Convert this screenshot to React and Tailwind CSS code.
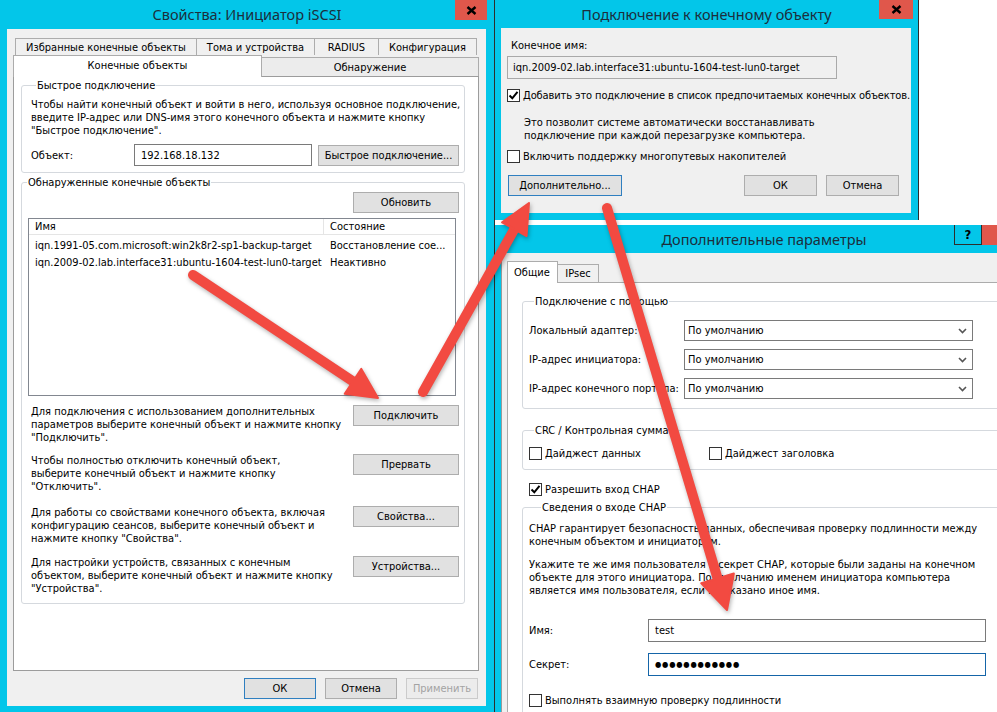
import clsx from "clsx";

const BODY = "font-['DejaVu_Sans_Condensed','DejaVu_Sans',sans-serif] text-[11px] leading-[13px] text-black";
const TITLE = "font-['Noto_Sans',sans-serif] text-[14.5px] text-[#1c2e3c]";

function Btn({ children, className, primary, disabled }) {
  return (
    <div
      className={clsx(
        "flex h-[21px] shrink-0 items-center justify-center border whitespace-nowrap",
        primary && "border-[#2f7fc0] bg-[#e1e1e1]",
        disabled && "border-[#cbcbcb] bg-[#ececec] text-[#a3a3a3]",
        !primary && !disabled && "border-[#adadad] bg-[#e1e1e1]",
        className
      )}
    >
      {children}
    </div>
  );
}

function Check({ checked }) {
  return (
    <span className="flex h-[13px] w-[13px] shrink-0 items-center justify-center border border-[#333] bg-white">
      {checked && (
        <svg width="11" height="11" viewBox="0 0 11 11">
          <path d="M1.5 5.5 L4.3 8.3 L9.5 1.8" stroke="#000" strokeWidth="2" fill="none" />
        </svg>
      )}
    </span>
  );
}

function Group({ title, className, legend = "ml-[5px]", children }) {
  return (
    <fieldset className={clsx("rounded-[3px] border border-[#d5d9de]", className)}>
      <legend className={clsx("px-[1px]", legend)}>{title}</legend>
      {children}
    </fieldset>
  );
}

function CloseX() {
  return (
    <svg width="11" height="9" viewBox="0 0 11 9">
      <path d="M1.5 1 L9.5 8 M9.5 1 L1.5 8" stroke="#000" strokeWidth="2.4" />
    </svg>
  );
}

function Select({ value }) {
  return (
    <div className="flex h-[21px] w-[289px] items-center justify-between border border-[#7a7a7a] bg-white pl-[3px] pr-[5px]">
      <span>{value}</span>
      <svg width="9" height="6" viewBox="0 0 9 6">
        <path d="M1 1 L4.5 4.5 L8 1" stroke="#555" strokeWidth="1.6" fill="none" />
      </svg>
    </div>
  );
}

function Arrow({ from, to, head = 30, half = 15, width = 10 }) {
  const [x1, y1] = from;
  const [x2, y2] = to;
  const len = Math.hypot(x2 - x1, y2 - y1);
  const ux = (x2 - x1) / len;
  const uy = (y2 - y1) / len;
  const bx = x2 - ux * head;
  const by = y2 - uy * head;
  const px = -uy * half;
  const py = ux * half;
  return (
    <g>
      <line x1={x1} y1={y1} x2={bx + ux * 4} y2={by + uy * 4} stroke="#f24a41" strokeWidth={width} strokeLinecap="round" />
      <polygon
        points={`${x2},${y2} ${bx + px},${by + py} ${bx - px},${by - py}`}
        fill="#f24a41"
        stroke="#f24a41"
        strokeWidth="2"
        strokeLinejoin="round"
      />
    </g>
  );
}

const actions = [
  {
    text: ["Для подключения с использованием дополнительных", "параметров выберите конечный объект и нажмите кнопку", "\"Подключить\"."],
    btn: "Подключить",
    mt: "mt-[9px]",
  },
  {
    text: ["Чтобы полностью отключить конечный объект,", "выберите конечный объект и нажмите кнопку", "\"Отключить\"."],
    btn: "Прервать",
    mt: "mt-[10px]",
  },
  {
    text: ["Для работы со свойствами конечного объекта, включая", "конфигурацию сеансов, выберите конечный объект и", "нажмите кнопку \"Свойства\"."],
    btn: "Свойства...",
    mt: "mt-[13px]",
  },
  {
    text: ["Для настройки устройств, связанных с конечным", "объектом, выберите конечный объект и нажмите кнопку", "\"Устройства\"."],
    btn: "Устройства...",
    mt: "mt-[11px]",
  },
];

function InitiatorWindow() {
  return (
    <div className="absolute left-0 top-0 flex h-[712px] w-[495px] flex-col border-r border-[#2d2d2d] bg-[#03c6e9]">
      <div className="relative flex h-[29px] shrink-0 items-center justify-center">
        <span className={TITLE}>Свойства: Инициатор iSCSI</span>
        <div className="absolute right-[7px] top-0 flex h-[20px] w-[32px] items-center justify-center bg-[#e0574b]">
          <CloseX />
        </div>
      </div>
      <div className="ml-[7px] flex h-[677px] w-[479px] shrink-0 flex-col bg-[#f0f0f0]">
        <div className="ml-[8px] mt-[9px] flex h-[17px]">
          {[
            ["Избранные конечные объекты", "w-[182px]"],
            ["Тома и устройства", "w-[118px]"],
            ["RADIUS", "w-[64px]"],
            ["Конфигурация", "w-[98px]"],
          ].map(([t, w], i) => (
            <div
              key={t}
              className={clsx("flex items-center justify-center border-t border-r border-[#acacac]", i === 0 && "border-l", w)}
            >
              {t}
            </div>
          ))}
        </div>
        <div className="relative z-10 -mt-[1px] ml-[6px] flex h-[22px] items-end">
          <div className="-mb-px flex h-[22px] w-[249px] items-start justify-center border-x border-t border-[#acacac] bg-white pt-[3px]">
            Конечные объекты
          </div>
          <div className="flex h-[19px] w-[217px] items-center justify-center border-r border-t border-[#acacac] bg-[#ececec]">
            Обнаружение
          </div>
        </div>
        <div className="ml-[6px] flex h-[595px] w-[466px] flex-col border border-[#9c9c9c] bg-white">
          <Group title="Быстрое подключение" className="ml-[7px] mt-[2px] w-[444px] pb-[6px] pl-[9px] pt-[6px]">
            <p>
              Чтобы найти конечный объект и войти в него, используя основное подключение,
              <br />
              введите IP-адрес или DNS-имя этого конечного объекта и нажмите кнопку
              <br />
              "Быстрое подключение".
            </p>
            <div className="mt-[7px] flex items-center">
              <span className="w-[103px]">Объект:</span>
              <div className="flex h-[22px] w-[178px] items-center border border-[#7a7a7a] bg-white pl-[6px]">
                192.168.18.132
              </div>
              <Btn className="ml-[6px] w-[141px]">Быстрое подключение...</Btn>
            </div>
          </Group>
          <Group title="Обнаруженные конечные объекты" className="ml-[7px] mt-[3px] w-[444px] pb-[8px] pt-[3px]">
            <div className="flex justify-end pr-[5px]">
              <Btn className="w-[106px]">Обновить</Btn>
            </div>
            <div className="ml-[6px] mt-[5px] h-[178px] w-[428px] border border-[#828790] bg-white">
              <div className="flex h-[16px] items-center border-b border-[#e5e5e5]">
                <span className="flex h-full w-[295px] items-center border-r border-[#e5e5e5] pl-[6px]">Имя</span>
                <span className="pl-[6px]">Состояние</span>
              </div>
              {[
                ["iqn.1991-05.com.microsoft:win2k8r2-sp1-backup-target", "Восстановление сое..."],
                ["iqn.2009-02.lab.interface31:ubuntu-1604-test-lun0-target", "Неактивно"],
              ].map(([a, b], i) => (
                <div key={a} className={clsx("flex h-[17px] items-center whitespace-nowrap", i === 0 && "mt-[2px]")}>
                  <span className="w-[295px] overflow-hidden pl-[6px]">{a}</span>
                  <span className="pl-[6px]">{b}</span>
                </div>
              ))}
            </div>
            {actions.map((r) => (
              <div key={r.btn} className={clsx("flex items-start justify-between pl-[9px] pr-[5px]", r.mt)}>
                <p className="whitespace-nowrap">
                  {r.text[0]}
                  <br />
                  {r.text[1]}
                  <br />
                  {r.text[2]}
                </p>
                <Btn className="w-[106px]">{r.btn}</Btn>
              </div>
            ))}
          </Group>
        </div>
        <div className="mt-[7px] flex justify-end gap-[9px] pr-[8px]">
          <Btn primary className="w-[72px]">ОК</Btn>
          <Btn className="w-[72px]">Отмена</Btn>
          <Btn disabled className="w-[72px]">Применить</Btn>
        </div>
      </div>
    </div>
  );
}

function ConnectWindow() {
  return (
    <div className="absolute left-[495px] top-0 flex h-[220px] w-[424px] flex-col border-r border-[#2d2d2d] bg-[#03c6e9]">
      <div className="relative flex h-[28px] shrink-0 items-center justify-center">
        <span className={TITLE}>Подключение к конечному объекту</span>
        <div className="absolute right-[5px] top-0 flex h-[19px] w-[34px] items-center justify-center bg-[#e0574b]">
          <CloseX />
        </div>
      </div>
      <div className="ml-[6px] flex h-[185px] w-[410px] shrink-0 flex-col bg-[#f0f0f0]">
        <span className="pl-[10px] pt-[11px]">Конечное имя:</span>
        <div className="ml-[6px] mt-[4px] flex h-[23px] w-[330px] items-center border border-[#a9a9a9] pl-[5px]">
          iqn.2009-02.lab.interface31:ubuntu-1604-test-lun0-target
        </div>
        <div className="ml-[6px] mt-[10px] flex items-center gap-[3px] whitespace-nowrap">
          <Check checked />
          <span className="tracking-[-0.1px]">Добавить это подключение в список предпочитаемых конечных объектов.</span>
        </div>
        <p className="mt-[14px] pl-[23px]">
          Это позволит системе автоматически восстанавливать
          <br />
          подключение при каждой перезагрузке компьютера.
        </p>
        <div className="ml-[6px] mt-[8px] flex items-center gap-[3px]">
          <Check />
          <span>Включить поддержку многопутевых накопителей</span>
        </div>
        <div className="mt-[12px] flex items-center pr-[12px]">
          <Btn primary className="ml-[7px] h-[20px] w-[114px]">Дополнительно...</Btn>
          <Btn className="ml-auto h-[20px] w-[73px]">ОК</Btn>
          <Btn className="ml-[9px] h-[20px] w-[73px]">Отмена</Btn>
        </div>
      </div>
    </div>
  );
}

function AdvancedWindow() {
  return (
    <div className="absolute left-[495px] top-[225px] flex h-[487px] w-[538px] flex-col overflow-hidden bg-[#03c6e9]">
      <div className="relative flex h-[28px] shrink-0 items-center justify-center">
        <span className={TITLE}>Дополнительные параметры</span>
        <div className="absolute right-[51px] top-0 flex h-[20px] w-[28px] items-center justify-center border-x border-b border-[#2d2d2d] text-[13px] font-bold">
          ?
        </div>
        <div className="absolute right-[6px] top-0 h-[20px] w-[45px] bg-[#e0574b]" />
      </div>
      <div className="ml-[6px] flex shrink-0 flex-col border-l border-[#9a9a9a] bg-[#f0f0f0]">
        <div className="relative z-10 ml-[5px] mt-[8px] flex h-[21px] items-end">
          <div className="-mb-px flex h-[22px] w-[51px] items-start border-x border-t border-[#acacac] bg-white pl-[6px] pt-[4px]">
            Общие
          </div>
          <div className="flex h-[18px] w-[41px] items-center justify-center border-r border-t border-[#acacac]">
            IPsec
          </div>
        </div>
        <div className="ml-[5px] flex flex-col border border-[#acacac] bg-white">
          <Group title="Подключение с помощью" className="ml-[14px] mt-[12px] w-[490px] pb-[9px] pl-[6px] pt-[12px]">
            <div className="flex flex-col gap-[8px]">
              {["Локальный адаптер:", "IP-адрес инициатора:", "IP-адрес конечного портала:"].map((l) => (
                <div key={l} className="flex items-center">
                  <span className="w-[155px] whitespace-nowrap">{l}</span>
                  <Select value="По умолчанию" />
                </div>
              ))}
            </div>
          </Group>
          <Group title="CRC / Контрольная сумма" className="ml-[14px] mt-[15px] w-[490px] pb-[9px] pl-[6px] pt-[10px]">
            <div className="flex items-center">
              <div className="flex w-[180px] items-center gap-[3px]">
                <Check />
                <span>Дайджест данных</span>
              </div>
              <div className="flex items-center gap-[3px]">
                <Check />
                <span>Дайджест заголовка</span>
              </div>
            </div>
          </Group>
          <div className="ml-[21px] mt-[13px] flex items-center gap-[3px]">
            <Check checked />
            <span>Разрешить вход CHAP</span>
          </div>
          <Group title="Сведения о входе CHAP" legend="ml-[12px]" className="ml-[14px] mt-[5px] w-[490px] pl-[6px] pt-[8px]">
            <p className="whitespace-nowrap">
              CHAP гарантирует безопасность данных, обеспечивая проверку подлинности между
              <br />
              конечным объектом и инициатором.
            </p>
            <p className="mt-[10px] whitespace-nowrap">
              Укажите те же имя пользователя и секрет CHAP, которые были заданы на конечном
              <br />
              объекте для этого инициатора. По умолчанию именем инициатора компьютера
              <br />
              является имя пользователя, если не указано иное имя.
            </p>
            <div className="mt-[22px] flex items-center">
              <span className="w-[119px]">Имя:</span>
              <div className="flex h-[23px] w-[338px] items-center border border-[#7a7a7a] bg-white pl-[6px]">test</div>
            </div>
            <div className="mt-[11px] flex items-center">
              <span className="w-[119px]">Секрет:</span>
              <div className="flex h-[23px] w-[338px] items-center border border-[#1565a8] bg-white pl-[6px] text-[8px] tracking-[0.8px]">
                ●●●●●●●●●●●●
              </div>
            </div>
            <div className="mt-[18px] flex items-center gap-[3px]">
              <Check />
              <span>Выполнять взаимную проверку подлинности</span>
            </div>
            <div className="h-[40px]" />
          </Group>
        </div>
      </div>
    </div>
  );
}

export default function App() {
  return (
    <div className={clsx("relative h-[712px] w-[997px] overflow-hidden bg-white", BODY)}>
      <InitiatorWindow />
      <ConnectWindow />
      <AdvancedWindow />
      <svg
        className="pointer-events-none absolute left-0 top-0 drop-shadow-[1px_2px_2px_rgba(0,0,0,0.3)]"
        width="997"
        height="712"
      >
        <Arrow from={[193, 275]} to={[378, 398]} />
        <Arrow from={[423, 392]} to={[529, 203]} half={14} />
        <Arrow from={[607, 208]} to={[727, 610]} head={33} half={17} />
      </svg>
    </div>
  );
}
